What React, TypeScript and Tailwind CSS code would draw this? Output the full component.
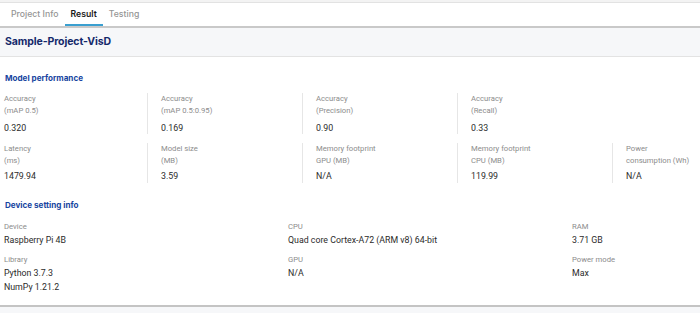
import React from "react";

const roboto = { fontFamily: "Roboto, 'Liberation Sans', sans-serif" };
const head = { fontFamily: "Inter, 'Noto Sans', sans-serif" };

type Cell = { l1: string; l2: string; v: string };

const row1: (Cell | null)[] = [
  { l1: "Accuracy", l2: "(mAP 0.5)", v: "0.320" },
  { l1: "Accuracy", l2: "(mAP 0.5:0.95)", v: "0.169" },
  { l1: "Accuracy", l2: "(Precision)", v: "0.90" },
  { l1: "Accuracy", l2: "(Recall)", v: "0.33" },
  null,
];
const row2: (Cell | null)[] = [
  { l1: "Latency", l2: "(ms)", v: "1479.94" },
  { l1: "Model size", l2: "(MB)", v: "3.59" },
  { l1: "Memory footprint", l2: "GPU (MB)", v: "N/A" },
  { l1: "Memory footprint", l2: "CPU (MB)", v: "119.99" },
  { l1: "Power", l2: "consumption (Wh)", v: "N/A" },
];

function MetricRow({ cells, tall }: { cells: (Cell | null)[]; tall: boolean }) {
  return (
    <div className="flex">
      {cells.map((c, i) => (
        <div
          key={i}
          className={
            (i === 0 ? "w-[147px] pl-[4px]" : "w-[155px] pl-[13px]") +
            " shrink-0 " +
            (c && i > 0 ? "border-l border-[#e6e6e6]" : "")
          }
        >
          {c && (
            <div className={tall ? "h-[41px]" : "h-[40px]"}>
              <div className="text-[7.7px] leading-[12px] text-[#8c8c8c]">{c.l1}</div>
              <div className="text-[7.7px] leading-[12px] text-[#8c8c8c]">{c.l2}</div>
              <div className={"text-[8.8px] text-[#2b2b2b] " + (tall ? "leading-[12px] mt-[5px]" : "leading-[12px] mt-[3px]")}>
                {c.v}
              </div>
            </div>
          )}
        </div>
      ))}
    </div>
  );
}

function Info({ label, values }: { label: string; values: string[] }) {
  return (
    <div>
      <div className="text-[7.7px] leading-[12px] text-[#8c8c8c]">{label}</div>
      {values.map((v) => (
        <div key={v} className="text-[8.8px] leading-[14px] text-[#2b2b2b]">
          {v}
        </div>
      ))}
    </div>
  );
}

export default function App() {
  return (
    <div className="w-[700px] h-[313px] bg-white overflow-hidden relative" style={roboto}>
      <div className="h-[2px] bg-[#f3f3f3]" />
      <div className="h-[1px] bg-[#e2e2e2]" />
      {/* tabs */}
      <div className="flex h-[23px] items-stretch pl-[5px]" style={head}>
        <div className="px-[6px] flex items-center text-[8.7px] font-medium text-[#959595]">Project Info</div>
        <div className="px-[6px] flex items-center text-[8.7px] font-semibold text-[#1a1a1a] border-b-[2px] border-[#3a9fd0] pt-[2px]">
          Result
        </div>
        <div className="px-[6px] flex items-center text-[8.7px] font-medium text-[#959595]">Testing</div>
      </div>
      <div className="h-[2px] bg-[#c9c9c9]" />
      {/* header */}
      <div className="h-[29px] bg-[#f6f7f9] border-b border-[#e3e3e3] flex items-center pl-[5px]">
        <div className="text-[10.5px] font-bold text-[#14296b] tracking-[-0.1px]" style={head}>
          Sample-Project-VisD
        </div>
      </div>
      {/* model performance */}
      <div className="pt-[15px]">
        <div className="pl-[5px] text-[8.1px] font-bold text-[#1745a0] leading-[12px]" style={head}>
          Model performance
        </div>
        <div className="mt-[9px] flex flex-col gap-[9px]">
          <MetricRow cells={row1} tall />
          <MetricRow cells={row2} tall={false} />
        </div>
        <div className="pl-[5px] mt-[16px] text-[8.1px] font-bold text-[#1745a0] leading-[12px]" style={head}>
          Device setting info
        </div>
        <div className="mt-[10px] grid grid-cols-[284px_284px_1fr] pl-[4px] gap-y-[7px]">
          <Info label="Device" values={["Raspberry Pi 4B"]} />
          <Info label="CPU" values={["Quad core Cortex-A72 (ARM v8) 64-bit"]} />
          <Info label="RAM" values={["3.71 GB"]} />
          <Info label="Library" values={["Python 3.7.3", "NumPy 1.21.2"]} />
          <Info label="GPU" values={["N/A"]} />
          <Info label="Power mode" values={["Max"]} />
        </div>
      </div>
      <div className="absolute left-0 right-0 top-[305px] h-[8px] bg-[#f6f7f9] border-t-[2px] border-[#c4c4c4]" />
    </div>
  );
}
